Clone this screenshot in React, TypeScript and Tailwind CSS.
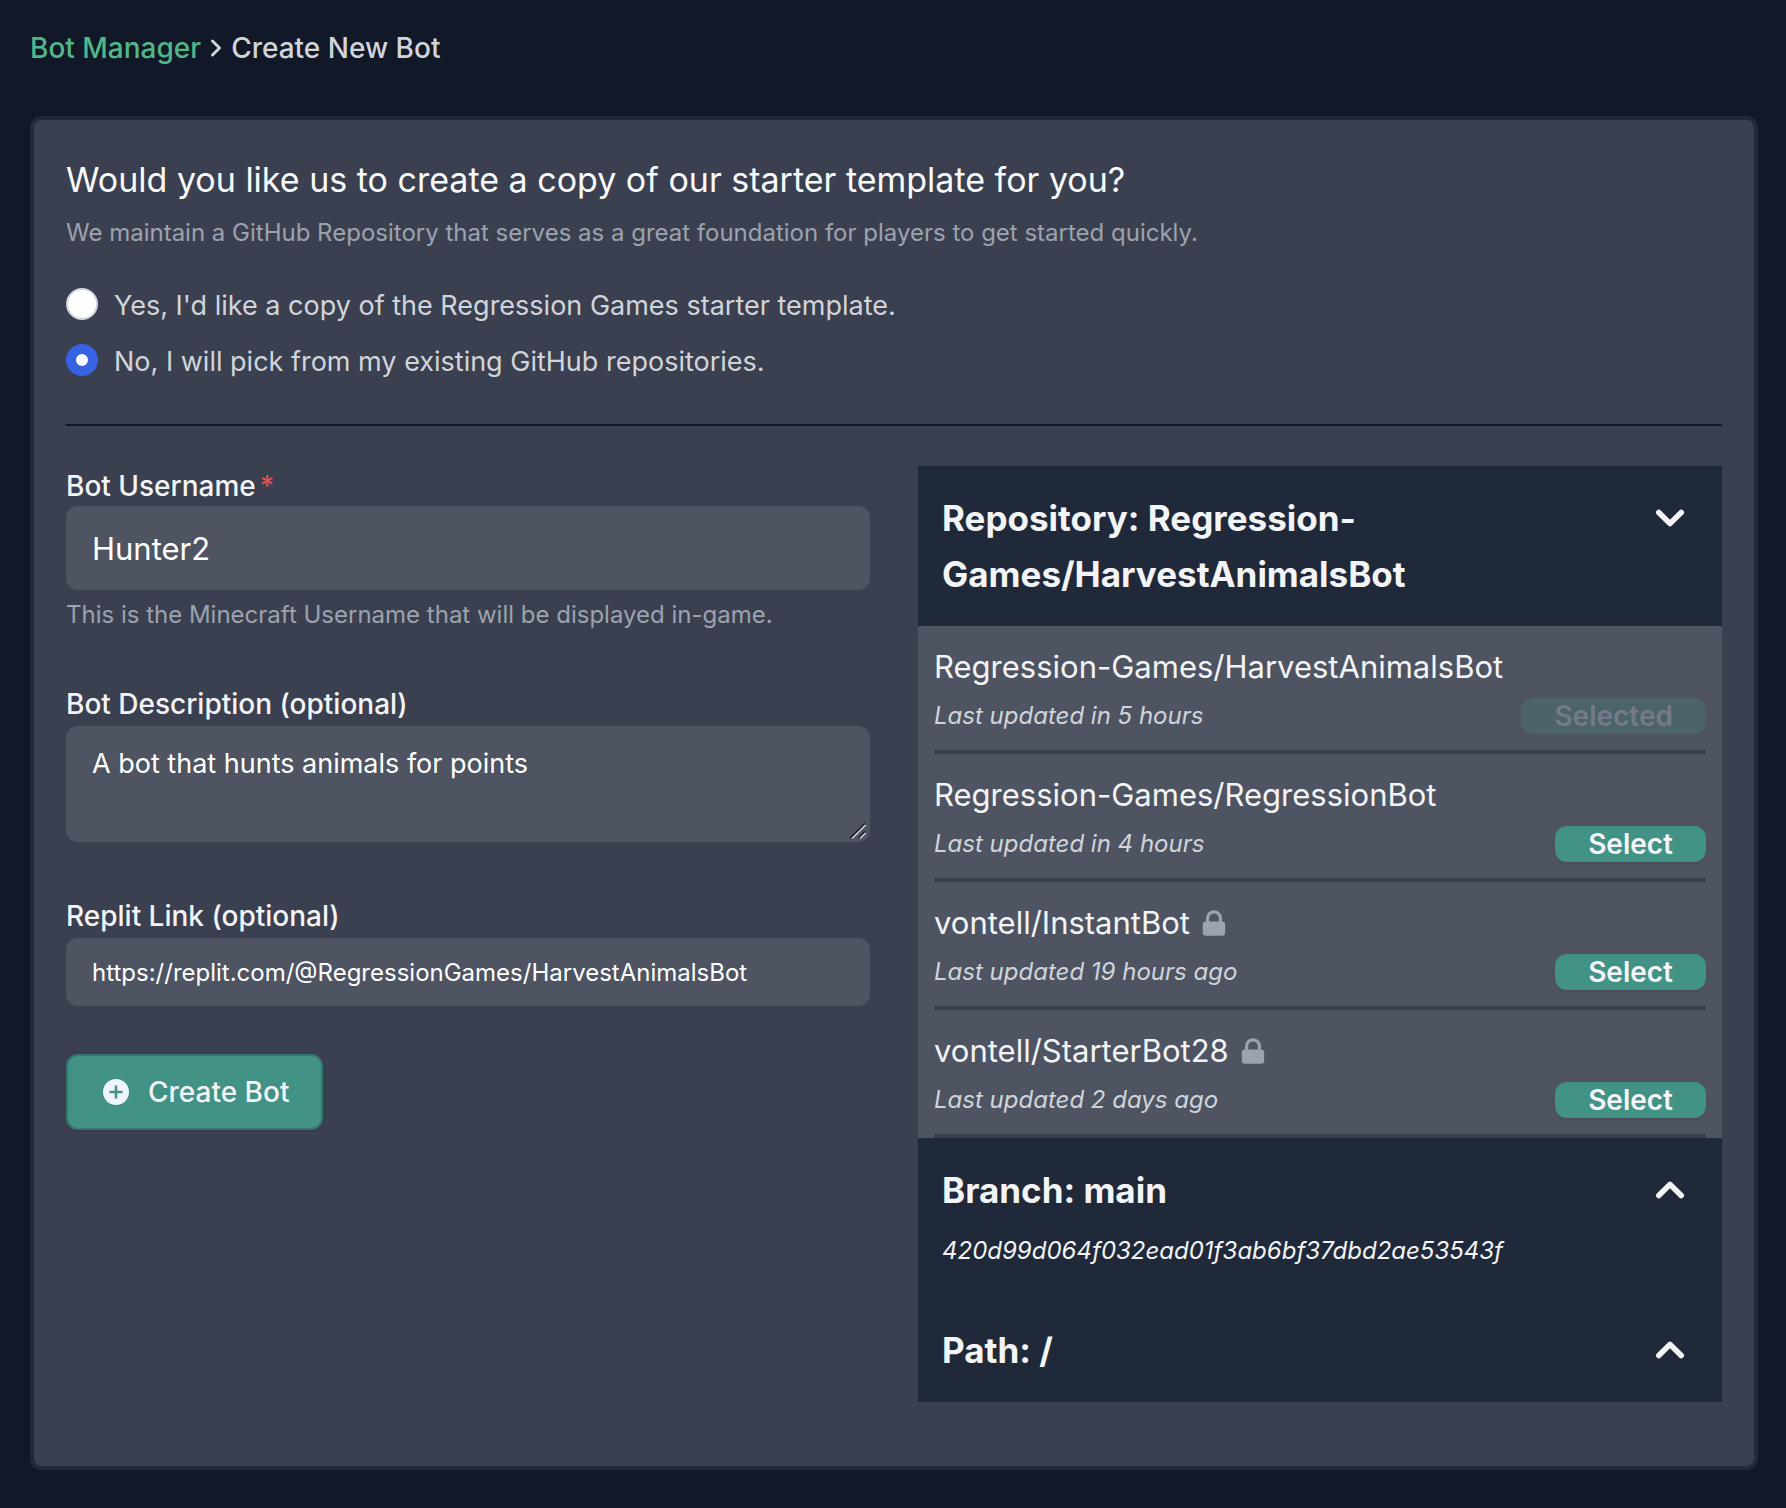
import { useState } from "react";

const repos = [
  { name: "Regression-Games/HarvestAnimalsBot", updated: "Last updated in 5 hours", locked: false },
  { name: "Regression-Games/RegressionBot", updated: "Last updated in 4 hours", locked: false },
  { name: "vontell/InstantBot", updated: "Last updated 19 hours ago", locked: true },
  { name: "vontell/StarterBot28", updated: "Last updated 2 days ago", locked: true },
];

function Chevron({ up = false }: { up?: boolean }) {
  return (
    <svg viewBox="0 0 20 20" fill="currentColor" className="size-14 shrink-0" aria-hidden="true">
      {up ? (
        <path d="M14.707 12.707a1 1 0 01-1.414 0L10 9.414l-3.293 3.293a1 1 0 01-1.414-1.414l4-4a1 1 0 011.414 0l4 4a1 1 0 010 1.414z" />
      ) : (
        <path d="M5.293 7.293a1 1 0 011.414 0L10 10.586l3.293-3.293a1 1 0 111.414 1.414l-4 4a1 1 0 01-1.414 0l-4-4a1 1 0 010-1.414z" />
      )}
    </svg>
  );
}

function Lock() {
  return (
    <svg viewBox="0 0 20 20" fill="currentColor" className="size-8 text-[#9ca3af]" role="img" aria-label="Private">
      <path fillRule="evenodd" clipRule="evenodd" d="M5 9V7a5 5 0 0110 0v2a2 2 0 012 2v5a2 2 0 01-2 2H5a2 2 0 01-2-2v-5a2 2 0 012-2zm8-2v2H7V7a3 3 0 016 0z" />
    </svg>
  );
}

const label = "block text-[28px] leading-10 font-medium text-[#f3f4f6]";
const field = "block w-full rounded-xl bg-[#4e5461] px-[26px] text-white outline-none";
const radio =
  "size-8 shrink-0 appearance-none rounded-full border-2 border-[#d1d5db] bg-white checked:border-[10px] checked:border-[#3662e3]";

export default function App() {
  const [template, setTemplate] = useState("no");
  const [selected, setSelected] = useState(repos[0].name);

  return (
    <main className="min-h-screen bg-[#111827] pt-7 pr-7 pb-9 pl-[30px] font-['Inter',sans-serif]">
      <nav aria-label="Breadcrumb" className="flex items-center gap-[7px] text-[28px] leading-10 font-medium text-[#d1d5db]">
        <a href="#bots" className="text-[#52b788]">Bot Manager</a>
        <svg viewBox="0 0 16 24" className="h-6 w-4" fill="none" stroke="currentColor" strokeWidth="3" strokeLinecap="round" strokeLinejoin="round" aria-hidden="true">
          <path d="M4.5 5l7 7-7 7" />
        </svg>
        <span>Create New Bot</span>
      </nav>

      <form
        onSubmit={(e) => e.preventDefault()}
        className="mt-12 rounded-xl border-4 border-[#222a39] bg-[#3b4050] px-8 pt-8 pb-16"
      >
        <fieldset>
          <legend className="text-[34px] leading-14 text-[#f9fafb]">
            Would you like us to create a copy of our starter template for you?
          </legend>
          <p className="mt-[5px] text-[24px] leading-10 text-[#9ca3af]">
            We maintain a GitHub Repository that serves as a great foundation for players to get started quickly.
          </p>
          <div className="mt-[35px] flex flex-col gap-5 text-[27px] leading-9 text-[#d1d5db]">
            <label className="flex items-start gap-4">
              <input type="radio" name="template" className={radio} checked={template === "yes"} onChange={() => setTemplate("yes")} />
              Yes, I'd like a copy of the Regression Games starter template.
            </label>
            <label className="flex items-start gap-4">
              <input type="radio" name="template" className={radio} checked={template === "no"} onChange={() => setTemplate("no")} />
              No, I will pick from my existing GitHub repositories.
            </label>
          </div>
        </fieldset>

        <hr className="mt-11 border-t-2 border-[#111827]" />

        <div className="mt-10 grid grid-cols-2 gap-12">
          <div>
            <label htmlFor="username" className={label}>
              Bot Username<span className="ml-1 text-[#e0524d]">*</span>
            </label>
            <input id="username" defaultValue="Hunter2" className={`${field} h-[84px] text-[31px]`} />
            <p className="mt-[5px] text-[24px] leading-10 text-[#9ca3af]">
              This is the Minecraft Username that will be displayed in-game.
            </p>

            <label htmlFor="description" className={`${label} mt-[49px] mb-0.5`}>
              Bot Description (optional)
            </label>
            <div className="relative">
              <textarea
                id="description"
                defaultValue="A bot that hunts animals for points"
                className={`${field} h-[116px] resize-y py-[18px] text-[27px] leading-10 [&::-webkit-resizer]:bg-transparent`}
              />
              <svg viewBox="0 0 16 16" className="pointer-events-none absolute right-1 bottom-[3px] size-4" fill="none" strokeWidth="1.6" aria-hidden="true">
                <path d="M.5 15L15 .5M8.500 15L15 8.500" stroke="#15181d" />
                <path d="M2 15.500L15.500 2M10 15.500L15.500 10" stroke="#c9ccd1" />
              </svg>
            </div>

            <label htmlFor="replit" className={`${label} mt-[54px] mb-0.5`}>
              Replit Link (optional)
            </label>
            <input
              id="replit"
              type="url"
              defaultValue="https://replit.com/@RegressionGames/HarvestAnimalsBot"
              className={`${field} h-[68px] text-[24px]`}
            />

            <button
              type="submit"
              className="mt-12 flex h-[76px] items-center gap-[19px] rounded-xl border-2 border-[#35766f] bg-[#439286] pr-8 pl-[35px] text-[28px] font-medium text-[#f3f4f6] shadow-sm"
            >
              <svg viewBox="0 0 26 26" className="size-[26px]" aria-hidden="true">
                <circle cx="13" cy="13" r="13" fill="#f1f4fa" />
                <path d="M13 7.5v11M7.5 13h11" fill="none" stroke="#439286" strokeWidth="2.6" strokeLinecap="round" />
              </svg>
              Create Bot
            </button>
          </div>

          <div className="bg-[#202939] text-[#f3f4f6]">
            <button type="button" aria-expanded="true" className="flex w-full items-start justify-between gap-16 p-6 text-left text-[35px] leading-14 font-bold">
              <span className="max-w-[520px]">Repository: Regression-Games/HarvestAnimalsBot</span>
              <Chevron />
            </button>

            <ul className="bg-[#4e5461] px-4">
              {repos.map((repo) => (
                <li key={repo.name} className="border-b-4 border-[#3b4050] pt-[17px] pb-4">
                  <div className="flex items-center gap-2 text-[31px] leading-[48px]">
                    {repo.name}
                    {repo.locked && <Lock />}
                  </div>
                  <div className="mt-[7px] flex h-9 items-center justify-between">
                    <span className="text-[24px] text-[#d1d5db] italic">{repo.updated}</span>
                    <button
                      type="button"
                      disabled={selected === repo.name}
                      onClick={() => setSelected(repo.name)}
                      className="h-9 rounded-xl bg-[#439286] px-[33px] text-[28px] leading-9 font-semibold text-[#f3f4f6] shadow-sm disabled:bg-[#4c636a] disabled:text-[#747a88] disabled:shadow-none"
                    >
                      {selected === repo.name ? "Selected" : "Select"}
                    </button>
                  </div>
                </li>
              ))}
            </ul>

            <button type="button" aria-expanded="false" className="flex w-full items-start justify-between p-6 text-left">
              <span>
                <span className="block text-[35px] leading-14 font-bold">Branch: main</span>
                <span className="mt-[13px] mb-[3px] block text-[24px] leading-10 italic">420d99d064f032ead01f3ab6bf37dbd2ae53543f</span>
              </span>
              <Chevron up />
            </button>
            <button type="button" aria-expanded="false" className="flex w-full items-start justify-between p-6 text-left">
              <span className="text-[35px] leading-14 font-bold">Path: /</span>
              <Chevron up />
            </button>
          </div>
        </div>
      </form>
    </main>
  );
}
